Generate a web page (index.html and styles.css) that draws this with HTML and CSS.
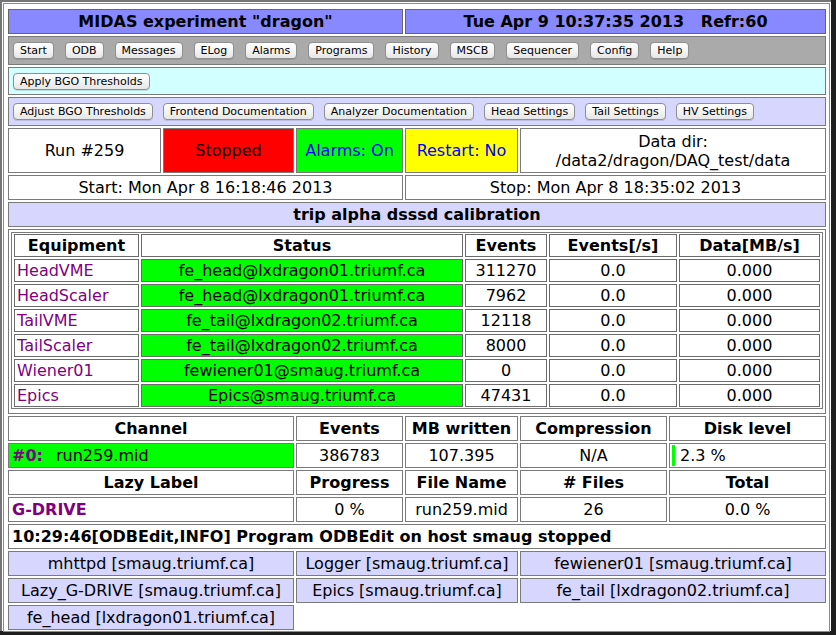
FILE: index.html
```html
<!DOCTYPE html>
<html>
<head>
<meta charset="utf-8">
<title>MIDAS status</title>
<link rel="stylesheet" href="styles.css">
</head>
<body>
<div class="window">
  <div class="page">
    <div class="main">
      <div class="cell s3 title">MIDAS experiment "dragon"</div>
      <div class="cell s3 title">Tue Apr 9 10:37:35 2013&nbsp;&nbsp;&nbsp;Refr:60</div>

      <div class="cell s6 btnrow gray wide">
        <span class="btn">Start</span><span class="btn">ODB</span><span class="btn">Messages</span><span class="btn">ELog</span><span class="btn">Alarms</span><span class="btn">Programs</span><span class="btn">History</span><span class="btn">MSCB</span><span class="btn">Sequencer</span><span class="btn">Config</span><span class="btn">Help</span>
      </div>

      <div class="cell s6 btnrow cyan">
        <span class="btn">Apply BGO Thresholds</span>
      </div>

      <div class="cell s6 btnrow lav">
        <span class="btn">Adjust BGO Thresholds</span><span class="btn">Frontend Documentation</span><span class="btn">Analyzer Documentation</span><span class="btn">Head Settings</span><span class="btn">Tail Settings</span><span class="btn">HV Settings</span>
      </div>

      <div class="cell">Run #259</div>
      <div class="cell red">Stopped</div>
      <div class="cell green blue-text">Alarms: On</div>
      <div class="cell yellow blue-text">Restart: No</div>
      <div class="cell s2 datadir"><span>Data dir:</span><span>/data2/dragon/DAQ_test/data</span></div>

      <div class="cell s3">Start: Mon Apr 8 16:18:46 2013</div>
      <div class="cell s3">Stop: Mon Apr 8 18:35:02 2013</div>

      <div class="cell s6 lav bold">trip alpha dsssd calibration</div>

      <div class="cell s6 equip">
        <div class="eqtable">
          <div class="ec bold">Equipment</div>
          <div class="ec bold">Status</div>
          <div class="ec bold">Events</div>
          <div class="ec bold">Events[/s]</div>
          <div class="ec bold">Data[MB/s]</div>

          <div class="ec name">HeadVME</div>
          <div class="ec green">fe_head@lxdragon01.triumf.ca</div>
          <div class="ec">311270</div>
          <div class="ec">0.0</div>
          <div class="ec">0.000</div>

          <div class="ec name">HeadScaler</div>
          <div class="ec green">fe_head@lxdragon01.triumf.ca</div>
          <div class="ec">7962</div>
          <div class="ec">0.0</div>
          <div class="ec">0.000</div>

          <div class="ec name">TailVME</div>
          <div class="ec green">fe_tail@lxdragon02.triumf.ca</div>
          <div class="ec">12118</div>
          <div class="ec">0.0</div>
          <div class="ec">0.000</div>

          <div class="ec name">TailScaler</div>
          <div class="ec green">fe_tail@lxdragon02.triumf.ca</div>
          <div class="ec">8000</div>
          <div class="ec">0.0</div>
          <div class="ec">0.000</div>

          <div class="ec name">Wiener01</div>
          <div class="ec green">fewiener01@smaug.triumf.ca</div>
          <div class="ec">0</div>
          <div class="ec">0.0</div>
          <div class="ec">0.000</div>

          <div class="ec name">Epics</div>
          <div class="ec green">Epics@smaug.triumf.ca</div>
          <div class="ec">47431</div>
          <div class="ec">0.0</div>
          <div class="ec">0.000</div>
        </div>
      </div>

      <div class="cell s2 bold">Channel</div>
      <div class="cell bold">Events</div>
      <div class="cell bold">MB written</div>
      <div class="cell bold">Compression</div>
      <div class="cell bold">Disk level</div>

      <div class="cell s2 green left"><span class="chan">#0:</span>run259.mid</div>
      <div class="cell">386783</div>
      <div class="cell">107.395</div>
      <div class="cell">N/A</div>
      <div class="cell disk"><span class="diskbar"></span><span class="disktext">2.3 %</span></div>

      <div class="cell s2 bold">Lazy Label</div>
      <div class="cell bold">Progress</div>
      <div class="cell bold">File Name</div>
      <div class="cell bold"># Files</div>
      <div class="cell bold">Total</div>

      <div class="cell s2 left lazy">G-DRIVE</div>
      <div class="cell">0 %</div>
      <div class="cell">run259.mid</div>
      <div class="cell">26</div>
      <div class="cell">0.0 %</div>

      <div class="cell s6 left bold">10:29:46[ODBEdit,INFO] Program ODBEdit on host smaug stopped</div>

      <div class="cell s2 lav">mhttpd [smaug.triumf.ca]</div>
      <div class="cell s2 lav">Logger [smaug.triumf.ca]</div>
      <div class="cell s2 lav">fewiener01 [smaug.triumf.ca]</div>

      <div class="cell s2 lav">Lazy_G-DRIVE [smaug.triumf.ca]</div>
      <div class="cell s2 lav">Epics [smaug.triumf.ca]</div>
      <div class="cell s2 lav">fe_tail [lxdragon02.triumf.ca]</div>

      <div class="cell s2 lav">fe_head [lxdragon01.triumf.ca]</div>
    </div>
  </div>
</div>
</body>
</html>
```

FILE: styles.css
```css
html, body {
  margin: 0;
  padding: 0;
  background: #1e1e1e;
}

.window {
  width: 836px;
  height: 635px;
  background: #1e1e1e;
  overflow: hidden;
}

.page {
  box-sizing: border-box;
  width: 831px;
  height: 631px;
  background: #ffffff;
  border-top: 2px solid #767676;
  border-left: 2px solid #767676;
  padding: 1px 0 0 1px;
  font-family: "DejaVu Sans", Verdana, sans-serif;
  font-size: 16px;
  color: #000;
}

.main {
  box-sizing: border-box;
  width: 827px;
  border: 1px solid #8c8c8c;
  padding: 5px 1px 1px 4px;
  display: grid;
  grid-template-columns: 153px 131px 107px 113px 147px 157px;
  grid-template-rows: 25px 29px 28px 29px 45px 25px 25px 185px 25px 25px 25px 25px 25px 25px 25px 25px;
  column-gap: 2px;
  row-gap: 2px;
}

.cell {
  box-sizing: border-box;
  border: 1px solid #7a7a7a;
  display: flex;
  align-items: center;
  justify-content: center;
  white-space: nowrap;
  line-height: 18px;
  overflow: hidden;
}

.s2 { grid-column: span 2; }
.s3 { grid-column: span 3; }
.s6 { grid-column: span 6; }

.title {
  background: #8888ff;
  font-weight: bold;
  border-color: #666;
}

.gray { background: #aaaaaa; }
.cyan { background: #d2ffff; }
.lav { background: #d6d6ff; }
.red { background: #ff0000; }
.green { background: #00ff00; }
.yellow { background: #ffff00; }
.blue-text { color: #0000ff; }
.bold { font-weight: bold; }

.left {
  justify-content: flex-start;
  padding-left: 3px;
}

.btnrow {
  justify-content: flex-start;
  padding-left: 4px;
  gap: 10px;
}

.btnrow.wide {
  gap: 11px;
}

.btn {
  box-sizing: border-box;
  height: 17px;
  padding: 0 6px;
  border: 1px solid #8f8f8f;
  border-radius: 4px;
  background: linear-gradient(#ffffff, #f4f4f4 50%, #e6e6e6);
  box-shadow: 0 1px 0 rgba(0, 0, 0, 0.12);
  font-size: 11px;
  line-height: 15px;
  color: #000;
  white-space: nowrap;
}

.datadir {
  flex-direction: column;
  line-height: 19px;
}

.equip {
  align-items: flex-start;
  justify-content: flex-start;
  padding: 2px;
}

.eqtable {
  box-sizing: border-box;
  width: 100%;
  border: 1px solid #7a7a7a;
  padding: 1px 2px;
  display: grid;
  grid-template-columns: 125px 322px 82px 128px 1fr;
  grid-auto-rows: 23px;
  column-gap: 2px;
  row-gap: 2px;
}

.ec {
  box-sizing: border-box;
  border: 1px solid #6a6a6a;
  display: flex;
  align-items: center;
  justify-content: center;
  white-space: nowrap;
  line-height: 18px;
}

.ec.name {
  justify-content: flex-start;
  padding-left: 2px;
  color: #800080;
}

.chan {
  color: #800080;
  font-weight: bold;
  margin-right: 13px;
}

.lazy {
  color: #800080;
  font-weight: bold;
}

.disk {
  justify-content: flex-start;
  align-items: stretch;
  padding: 1px;
}

.diskbar {
  width: 3px;
  background: #00ff00;
  margin-left: 1px;
}

.disktext {
  display: flex;
  align-items: center;
  padding-left: 5px;
}
```
